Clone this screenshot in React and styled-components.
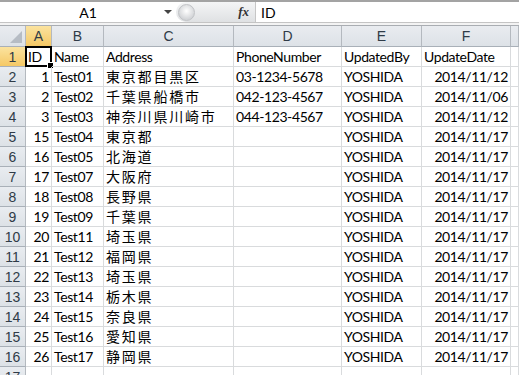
import React from 'react';
import styled, { createGlobalStyle } from 'styled-components';

const Global = createGlobalStyle`
  html, body { margin: 0; padding: 0; background: #fff; }
  body { font-family: Lato, "Liberation Sans", "Noto Sans CJK JP", sans-serif; }
`;

const Page = styled.div`
  width: 519px;
  height: 375px;
  overflow: hidden;
  background: #fff;
`;

const FormulaBar = styled.div`
  display: flex;
  align-items: stretch;
  height: 20px;
  border-top: 2px solid #a3a3a3;
  border-bottom: 1px solid #c4c4c4;
`;

const NameBox = styled.div`
  position: relative;
  width: 176px;
  display: flex;
  align-items: center;
  justify-content: center;
  font-size: 14px;
  color: #000;
`;

const Arrow = styled.span`
  position: absolute;
  right: 4px;
  top: 8px;
  width: 0;
  height: 0;
  border-left: 4px solid transparent;
  border-right: 4px solid transparent;
  border-top: 4px solid #444;
`;

const FxBox = styled.div`
  width: 80px;
  display: flex;
  align-items: center;
  justify-content: space-between;
  padding: 0 6px 0 2px;
  box-sizing: border-box;
  border-radius: 10px 0 0 10px;
  background: linear-gradient(#f4f5f6, #dfe1e3);
  border-right: 1px solid #c6c6c6;
`;

const Knob = styled.span`
  width: 15px;
  height: 15px;
  border-radius: 50%;
  background: radial-gradient(circle at 50% 40%, #ffffff, #d3d5d8 70%);
  border: 1px solid #c1c3c6;
`;

const Fx = styled.span`
  font-family: "Liberation Serif", serif;
  font-style: italic;
  font-weight: bold;
  font-size: 13px;
  color: #333;
`;

const Formula = styled.div`
  flex: 1;
  display: flex;
  align-items: center;
  padding-left: 5px;
  font-size: 14px;
`;

const Gap = styled.div`
  height: 2px;
  border-bottom: 1px solid #a9adb2;
  background: #f3f3f3;
`;

const Grid = styled.div`
  display: grid;
  grid-template-columns: 26px 26px 52px 130px 108px 80px 89px 1fr;
  grid-auto-rows: 20px;
  grid-template-rows: 21px;
`;

const Cell = styled.div`
  box-sizing: border-box;
  border-right: 1px solid #d9dbdd;
  border-bottom: 1px solid #d9dbdd;
  font-family: ${p => (p.$jp ? '"Noto Sans CJK JP", sans-serif' : 'Lato, "Liberation Sans", sans-serif')};
  font-size: 14px;
  line-height: 19px;
  padding: 0 2px;
  white-space: nowrap;
  overflow: visible;
  color: #000;
  text-align: ${p => (p.$right ? 'right' : 'left')};
  letter-spacing: ${p => (p.$jp ? '1.8px' : '-0.4px')};
  position: relative;
`;

const Header = styled.div`
  box-sizing: border-box;
  border-right: 1px solid #b4b9bf;
  border-bottom: 1px solid #a9b0b8;
  background: ${p => (p.$active ? 'linear-gradient(#fbe39f, #f5c865)' : 'linear-gradient(#e9ecf0, #dde2e7)')};
  color: #2f3b47;
  font-family: "Liberation Sans", Arial, sans-serif;
  font-size: 14px;
  display: flex;
  align-items: center;
  justify-content: center;
  position: relative;
`;

const Corner = styled(Header)`
  &::after {
    content: '';
    position: absolute;
    right: 3px;
    bottom: 3px;
    width: 0;
    height: 0;
    border-left: 12px solid transparent;
    border-bottom: 12px solid #b6bcc4;
  }
`;

const Active = styled.div`
  position: absolute;
  left: -1px;
  top: -1px;
  right: -1px;
  bottom: -1px;
  border: 2px solid #000;
  &::after {
    content: '';
    position: absolute;
    right: -4px;
    bottom: -4px;
    width: 5px;
    height: 5px;
    background: #000;
    border: 1px solid #fff;
  }
`;

const rows = [
  [1, 'Test01', '東京都目黒区', '03-1234-5678', '2014/11/12'],
  [2, 'Test02', '千葉県船橋市', '042-123-4567', '2014/11/06'],
  [3, 'Test03', '神奈川県川崎市', '044-123-4567', '2014/11/12'],
  [15, 'Test04', '東京都', '', '2014/11/17'],
  [16, 'Test05', '北海道', '', '2014/11/17'],
  [17, 'Test07', '大阪府', '', '2014/11/17'],
  [18, 'Test08', '長野県', '', '2014/11/17'],
  [19, 'Test09', '千葉県', '', '2014/11/17'],
  [20, 'Test11', '埼玉県', '', '2014/11/17'],
  [21, 'Test12', '福岡県', '', '2014/11/17'],
  [22, 'Test13', '埼玉県', '', '2014/11/17'],
  [23, 'Test14', '栃木県', '', '2014/11/17'],
  [24, 'Test15', '奈良県', '', '2014/11/17'],
  [25, 'Test16', '愛知県', '', '2014/11/17'],
  [26, 'Test17', '静岡県', '', '2014/11/17'],
];

const cols = ['A', 'B', 'C', 'D', 'E', 'F', ''];

export default function App() {
  return (
    <Page>
      <Global />
      <FormulaBar>
        <NameBox>A1<Arrow /></NameBox>
        <FxBox><Knob /><Fx>fx</Fx></FxBox>
        <Formula>ID</Formula>
      </FormulaBar>
      <Gap />
      <Grid>
        <Corner />
        {cols.map((c, i) => (
          <Header key={i} $active={c === 'A'}>{c}</Header>
        ))}

        <Header $active>1</Header>
        <Cell>ID<Active /></Cell>
        <Cell>Name</Cell>
        <Cell>Address</Cell>
        <Cell>PhoneNumber</Cell>
        <Cell>UpdatedBy</Cell>
        <Cell>UpdateDate</Cell>
        <Cell />

        {rows.map((r, i) => (
          <React.Fragment key={i}>
            <Header>{i + 2}</Header>
            <Cell $right>{r[0]}</Cell>
            <Cell>{r[1]}</Cell>
            <Cell $jp>{r[2]}</Cell>
            <Cell>{r[3]}</Cell>
            <Cell>YOSHIDA</Cell>
            <Cell $right>{r[4]}</Cell>
            <Cell />
          </React.Fragment>
        ))}

        <Header>17</Header>
        {cols.map((c, i) => <Cell key={i} />)}
      </Grid>
    </Page>
  );
}
